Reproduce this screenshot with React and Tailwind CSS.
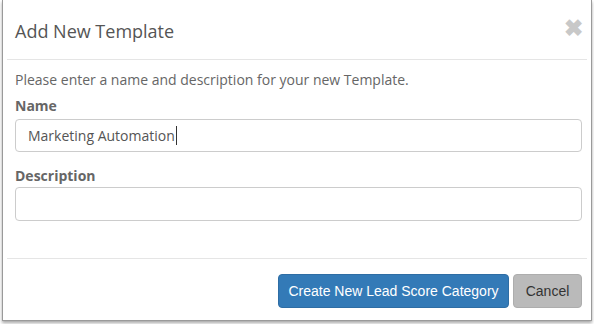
export default function App() {
  return (
    <div className="w-[594px] h-[324px] bg-white overflow-hidden" style={{ fontFamily: '"Open Sans", sans-serif' }}>
      <div className="ml-[2px] w-[590px] h-[321px] bg-white border-l border-r border-b border-[#9a9a9a] shadow-[0_2px_3px_rgba(0,0,0,0.35)] px-[4px] flex flex-col">
        <div className="h-[60px] shrink-0 border-b border-[#e5e5e5] flex items-center justify-between pl-[8px] pr-[4px]">
          <h4 className="text-[18px] text-[#555] leading-none pt-[2px]">Add New Template</h4>
          <span className="text-[23px] leading-none font-bold text-[#c8c8c8] -mt-[3px]" style={{ fontFamily: '"Liberation Sans", sans-serif' }}>
            ✖
          </span>
        </div>
        <div className="pl-[8px] pr-[5px] pt-[10px] h-[198px] shrink-0">
          <p className="text-[14px] leading-[20px] text-[#666]">Please enter a name and description for your new Template.</p>
          <label className="block text-[14px] leading-[20px] font-bold text-[#666] mt-[6px]">Name</label>
          <div className="mt-[3px] h-[33px] border border-[#ccc] rounded-[4px] flex items-center pl-[12px] text-[14px] text-[#555]">
            <span>Marketing Automation</span>
            <span className="inline-block w-px h-[19px] bg-[#333] ml-px"></span>
          </div>
          <label className="block text-[14px] leading-[20px] font-bold text-[#666] mt-[14px]">Description</label>
          <div className="mt-[1px] h-[34px] border border-[#ccc] rounded-[4px]"></div>
        </div>
        <div className="border-t border-[#e5e5e5] flex justify-end gap-[4px] pr-[5px] pt-[15px]" style={{ fontFamily: '"Liberation Sans", Arial, sans-serif' }}>
          <button className="w-[231px] h-[34px] rounded-[4px] bg-[#337ab7] border border-[#2e6da4] text-white text-[14px]">
            Create New Lead Score Category
          </button>
          <button className="w-[69px] h-[34px] rounded-[4px] bg-[#bababa] border border-[#adadad] text-[#333] text-[14px]">
            Cancel
          </button>
        </div>
      </div>
    </div>
  );
}
